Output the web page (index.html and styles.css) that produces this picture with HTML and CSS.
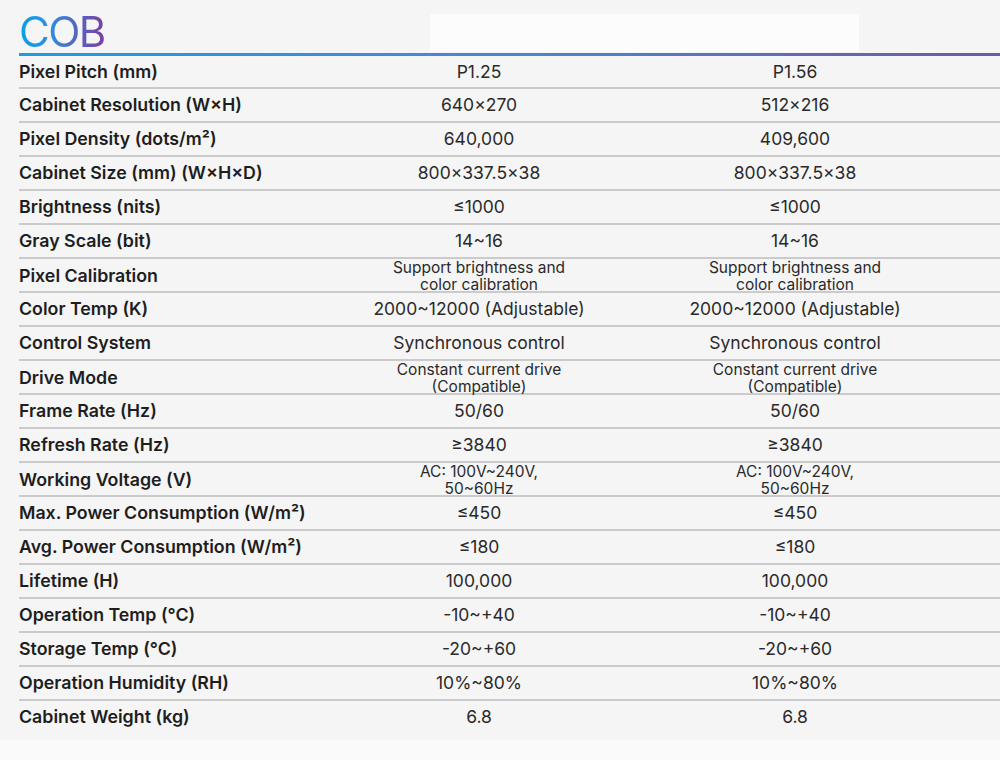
FILE: index.html
```html
<!DOCTYPE html>
<html lang="en">
<head>
  <meta charset="UTF-8">
  <meta name="viewport" content="width=device-width, initial-scale=1.0">
  <title>COB Specifications</title>
  <link rel="stylesheet" href="styles.css">
</head>
<body>
  <div class="sheet">
    <div class="header">
      <h1 class="title">COB</h1>
      <div class="banner"></div>
    </div>

    <div class="specs">
      <div class="row"><div class="label">Pixel Pitch (mm)</div><div class="value">P1.25</div><div class="value">P1.56</div></div>
      <div class="row"><div class="label">Cabinet Resolution (W×H)</div><div class="value">640×270</div><div class="value">512×216</div></div>
      <div class="row"><div class="label">Pixel Density (dots/m²)</div><div class="value">640,000</div><div class="value">409,600</div></div>
      <div class="row"><div class="label">Cabinet Size (mm) (W×H×D)</div><div class="value">800×337.5×38</div><div class="value">800×337.5×38</div></div>
      <div class="row"><div class="label">Brightness (nits)</div><div class="value">≤1000</div><div class="value">≤1000</div></div>
      <div class="row"><div class="label">Gray Scale (bit)</div><div class="value">14~16</div><div class="value">14~16</div></div>
      <div class="row"><div class="label">Pixel Calibration</div><div class="value small">Support brightness and<br>color calibration</div><div class="value small">Support brightness and<br>color calibration</div></div>
      <div class="row"><div class="label">Color Temp (K)</div><div class="value">2000~12000 (Adjustable)</div><div class="value">2000~12000 (Adjustable)</div></div>
      <div class="row"><div class="label">Control System</div><div class="value">Synchronous control</div><div class="value">Synchronous control</div></div>
      <div class="row"><div class="label">Drive Mode</div><div class="value small">Constant current drive<br>(Compatible)</div><div class="value small">Constant current drive<br>(Compatible)</div></div>
      <div class="row"><div class="label">Frame Rate (Hz)</div><div class="value">50/60</div><div class="value">50/60</div></div>
      <div class="row"><div class="label">Refresh Rate (Hz)</div><div class="value">≥3840</div><div class="value">≥3840</div></div>
      <div class="row"><div class="label">Working Voltage (V)</div><div class="value small">AC: 100V~240V,<br>50~60Hz</div><div class="value small">AC: 100V~240V,<br>50~60Hz</div></div>
      <div class="row"><div class="label">Max. Power Consumption (W/m²)</div><div class="value">≤450</div><div class="value">≤450</div></div>
      <div class="row"><div class="label">Avg. Power Consumption (W/m²)</div><div class="value">≤180</div><div class="value">≤180</div></div>
      <div class="row"><div class="label">Lifetime (H)</div><div class="value">100,000</div><div class="value">100,000</div></div>
      <div class="row"><div class="label">Operation Temp (°C)</div><div class="value">-10~+40</div><div class="value">-10~+40</div></div>
      <div class="row"><div class="label">Storage Temp (°C)</div><div class="value">-20~+60</div><div class="value">-20~+60</div></div>
      <div class="row"><div class="label">Operation Humidity (RH)</div><div class="value">10%~80%</div><div class="value">10%~80%</div></div>
      <div class="row"><div class="label">Cabinet Weight (kg)</div><div class="value">6.8</div><div class="value">6.8</div></div>
    </div>
  </div>
</body>
</html>
```

FILE: styles.css
```css
body {
  margin: 0;
  background-color: #fafafa;
  font-family: 'Inter', 'Liberation Sans', sans-serif;
  color: #222222;
}

.sheet {
  background-color: #f5f5f5;
  padding-bottom: 7px;
}

.header {
  display: flex;
  align-items: flex-end;
  height: 53px;
  padding-left: 19px;
}

.title {
  margin: 0;
  font-size: 42px;
  line-height: 42px;
  font-weight: 400;
  letter-spacing: -1.5px;
  background: linear-gradient(90deg, #0aa0e6 0%, #2f8ee0 35%, #7a3ea2 100%);
  -webkit-background-clip: text;
  background-clip: text;
  color: transparent;
}

.banner {
  width: 429px;
  height: 38px;
  margin-left: 325px;
  margin-bottom: 1px;
  background-color: #fcfcfc;
}

.specs {
  margin-left: 19px;
  border-top: 3px solid #4a8ad6;
  border-image: linear-gradient(90deg, #1b9be2 0%, #4c84d4 50%, #6e5aa8 100%) 1;
}

.row {
  display: grid;
  grid-template-columns: 302px 316px 316px;
  align-items: center;
  height: 32px;
  border-top: 2px solid #cbcbcb;
}

.row:first-child {
  height: 31px;
  border-top: none;
}

.label {
  font-size: 17.8px;
  line-height: 20px;
  font-weight: 600;
  color: #1e1e1e;
}

.value {
  font-size: 17.5px;
  line-height: 20px;
  text-align: center;
  color: #2a2a2a;
}

.value.small {
  font-size: 15.5px;
  line-height: 17px;
}
```
